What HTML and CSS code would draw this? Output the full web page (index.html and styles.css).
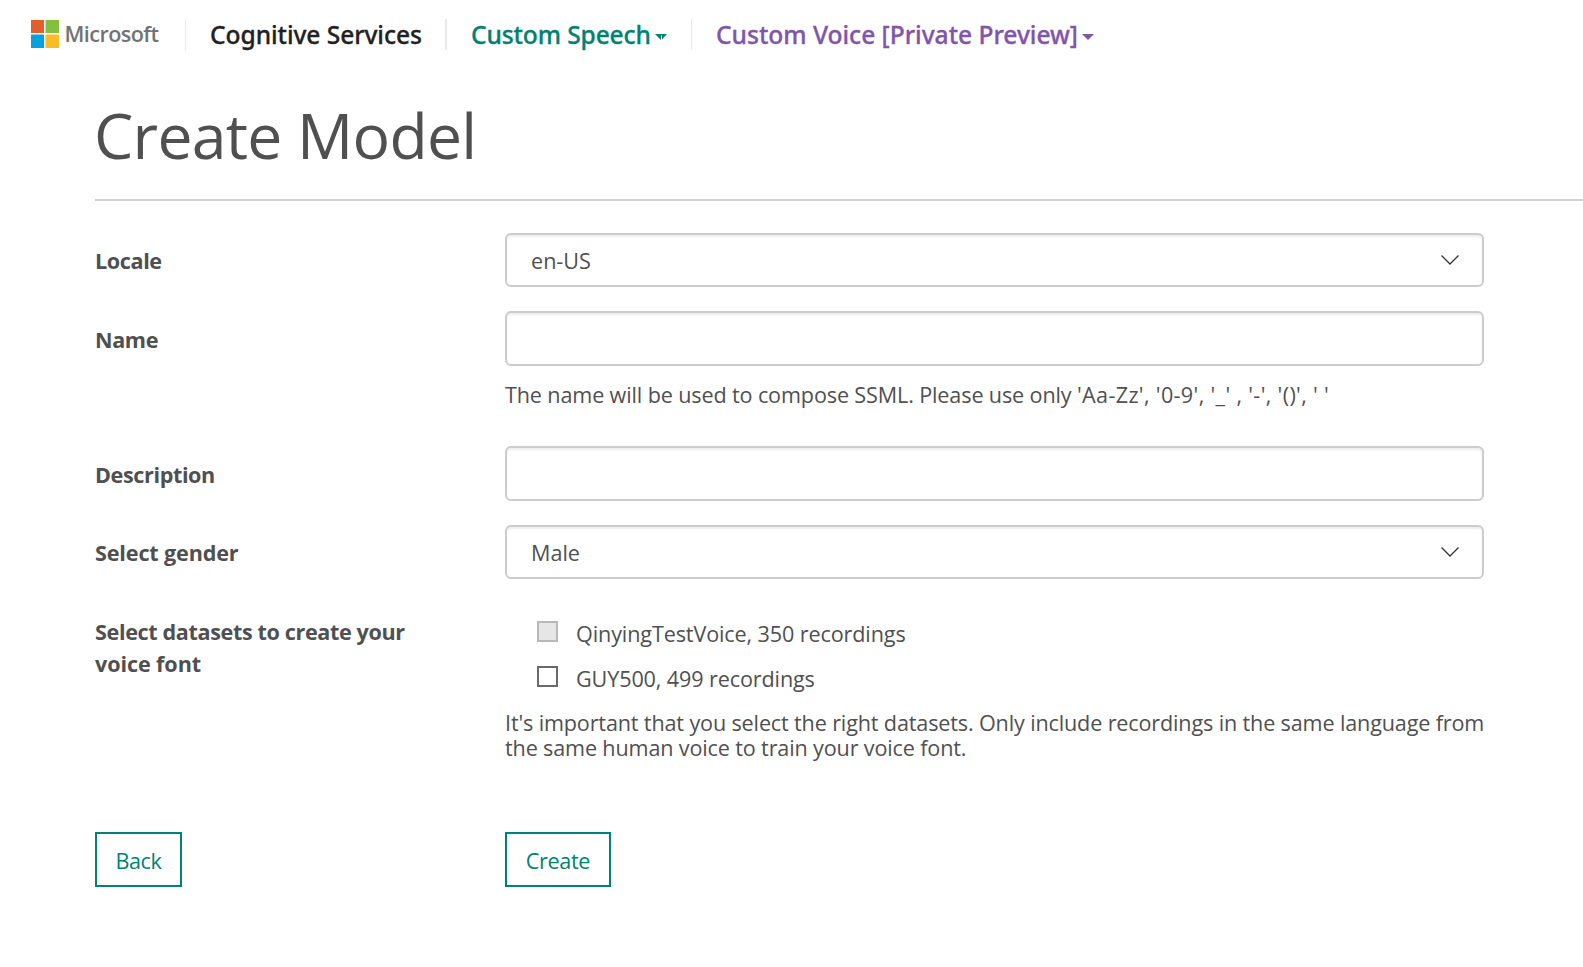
FILE: index.html
```
<!DOCTYPE html>
<html lang="en">
<head>
<meta charset="utf-8">
<title>Create Model</title>
<link rel="stylesheet" href="styles.css">
</head>
<body>
<header class="topbar">
  <a class="brand"><svg class="logo" viewBox="0 0 28 28"><path fill="#e15f2b" d="M0 0h13v13H0z"/><path fill="#84c03f" d="M14.500 0H28v13H14.500z"/><path fill="#04a2df" d="M0 14.500h13V28H0z"/><path fill="#f6bd26" d="M14.500 14.500H28V28H14.500z"/></svg><span class="brand-name">Microsoft</span></a>
  <a class="nav nav-services"><span>Cognitive Services</span></a>
  <a class="nav nav-speech"><span>Custom Speech</span><svg class="caret" viewBox="0 0 13 7"><path fill="currentColor" d="M0 0h12L7 5.500V1.500H6V6L3.500 3.500z"/></svg></a>
  <a class="nav nav-voice"><span>Custom Voice [Private Preview]</span><svg class="caret" viewBox="0 0 13 7"><path fill="currentColor" d="M0 0h12L6 6z"/></svg></a>
</header>
<main class="page">
  <h1 class="title">Create Model</h1>
  <form class="form">
    <div class="row row-locale"><label class="label">Locale</label><div class="field select"><span>en-US</span><svg class="chevron" viewBox="0 0 18 10"><path d="M.5.5 9 9 17.500.5"/></svg></div></div>
    <div class="row row-name"><label class="label">Name</label><div><div class="field input"></div><p class="hint">The name will be used to compose SSML. Please use only <span class="charset">'Aa-Zz', '0-9', '_' , '-', '()', ' '</span></p></div></div>
    <div class="row row-description"><label class="label">Description</label><div class="field input"></div></div>
    <div class="row row-gender"><label class="label">Select gender</label><div class="field select"><span>Male</span><svg class="chevron" viewBox="0 0 18 10"><path d="M.5.5 9 9 17.500.5"/></svg></div></div>
    <div class="row row-datasets"><label class="label">Select datasets to create your<br><span class="label-end">voice font</span></label>
      <div class="datasets"><div class="option"><i class="box disabled"></i><span>QinyingTestVoice, 350 recordings</span></div><div class="option"><i class="box"></i><span>GUY500, 499 recordings</span></div>
      <p class="note">It's important that you select the right datasets. Only include recordings in the same language from<br>the same human voice to train your voice font.</p></div></div>
    <div class="row actions"><div><button type="button" class="button back">Back</button></div><div><button type="button" class="button create">Create</button></div></div>
  </form>
</main>
</body>
</html>
```
FILE: styles.css
```
* { box-sizing: border-box; }
body { margin: 0; height: 967px; overflow: hidden; background: #fff; color: #505050; font: 21.6px/25px "Open Sans", sans-serif; }
p, h1 { margin: 0; }
span, p, .label { white-space: nowrap; }
.topbar { display: flex; height: 69px; padding: 19px 0 0 31px; }
.brand { display: flex; width: 154px; height: 31px; }
.logo { width: 28px; height: 28px; margin-top: 1px; flex: none; }
.brand-name { margin-left: 5.5px; line-height: 29px; font-weight: 600; letter-spacing: -.58px; color: #737373; }
.nav { display: flex; height: 31px; line-height: 31px; border-left: 1px solid #e9e9e9; padding-left: 24px; font-family: "Noto Sans", sans-serif; font-size: 24.6px; font-weight: 500; -webkit-text-stroke: .3px currentColor; letter-spacing: -.08px; }
.nav-services { width: 260px; color: #222; }
.nav-speech { width: 246px; border-left-width: 2px; color: #008272; letter-spacing: -.14px; }
.nav-voice { color: #8155ab; letter-spacing: -.03px; }
.caret { width: 13px; height: 7px; margin: 15px 0 0 4px; flex: none; }
.page { padding-left: 95px; }
.title { height: 132px; border-bottom: 2px solid #d0d0d0; padding-top: 25px; font-size: 62.5px; line-height: 82px; font-weight: 400; letter-spacing: -.75px; text-indent: -1px; }
.form { padding-top: 32px; }
.row { display: grid; grid-template-columns: 410px 979px; }
.row-locale { height: 78px; }
.row-name { height: 135px; }
.row-description { height: 79px; }
.row-gender { height: 80px; }
.row-datasets { height: 227px; }
.label { padding-top: 12px; font-weight: 700; line-height: 32px; letter-spacing: -.39px; }
.row-name .label, .row-description .label { padding-top: 13px; }
.row-gender .label { letter-spacing: -.15px; }
.row-datasets .label { padding-top: 11px; letter-spacing: -.37px; }
.label .label-end { letter-spacing: -.1px; }
.field { height: 54px; border: 2px solid #ccc; border-radius: 6px; box-shadow: inset 0 2px 2px rgba(0,0,0,.07); }
.input { height: 55px; }
.select { display: flex; justify-content: space-between; padding: 13px 23px 0 24px; }
.chevron { width: 18px; height: 10px; margin-top: 7px; fill: none; stroke: #333; stroke-width: 1.3; }
.hint { margin-top: 16px; letter-spacing: -.135px; }
.charset { letter-spacing: .34px; }
.option { display: flex; height: 45px; padding: 16px 0 0 32px; letter-spacing: -.12px; }
.option span { margin-left: 18px; }
.box { width: 21px; height: 21px; border: 2px solid #6a6a6a; flex: none; }
.disabled { border-color: #b8b8b8; background: #e6e6e6; }
.note { margin-top: 15px; letter-spacing: -.147px; }
.button { height: 55px; border: 2px solid #008272; background: #fff; color: #008272; font: inherit; letter-spacing: -.35px; padding: 1px 0 0; border-radius: 0; display: block; }
.back { width: 87px; }
.create { width: 106px; }
```
